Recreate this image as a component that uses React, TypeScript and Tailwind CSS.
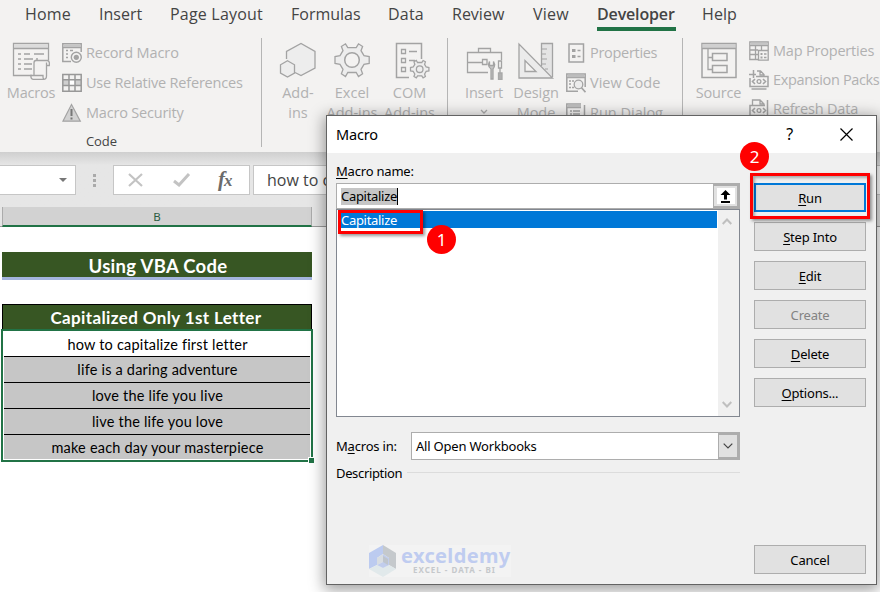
import type { ReactNode } from 'react';

const tabs = [
  { label: 'Home', cls: 'w-[74px] tracking-[0.2px]' },
  { label: 'Insert', cls: 'w-[71px] tracking-[0px]' },
  { label: 'Page Layout', cls: 'w-[121px] tracking-[0.2px]' },
  { label: 'Formulas', cls: 'w-[97px] tracking-[0px]' },
  { label: 'Data', cls: 'w-[64px] tracking-[0.2px]' },
  { label: 'Review', cls: 'w-[81px] tracking-[0px]' },
  { label: 'View', cls: 'w-[64px] tracking-[0.2px]' },
  { label: 'Developer', cls: 'w-[105px] tracking-[0px]', active: true },
  { label: 'Help', cls: 'w-[60px] tracking-[0.1px]' },
];

const rows = [
  'how to capitalize first letter',
  'life is a daring adventure',
  'love the life you live',
  'live the life you love',
  'make each day your masterpiece',
];

function Icon({ w, h, children }: { w: number; h: number; children: ReactNode }) {
  return (
    <svg width={w} height={h} viewBox={`0 0 ${w} ${h}`} fill="none" stroke="#a3a3a3" strokeWidth="1.3" className="shrink-0">
      {children}
    </svg>
  );
}

function MacrosIcon() {
  return (
    <Icon w={38} h={38}>
      <path d="M20 33.5H1.5V1.5H36.500V18" />
      <path d="M2 2.500H36V6H2z" fill="#dcdcdc" stroke="none" />
      <path d="M1.500 6.500H36.500" />
      <path d="M6 12h3M12 12h6M22 12h10M6 17h3M12 17h9M24 17h2M6 22h3M12 22h8M6 27h3M12 27h8" strokeWidth="1.500" />
      <path d="M23 18.500H35.500Q38 19 37.300 23.500H34.500V34Q34.500 37.300 31.500 37.300H21Q18.800 37 18.800 33.500H22V21Q22 18.500 24 18.500M34.500 23.500V20.500M22 33.500H31V35Q31 37 32 37" fill="#f3f2f1" />
    </Icon>
  );
}

function AddinsIcon() {
  return (
    <Icon w={38} h={38}>
      <path d="M7.500 17V9.500L22 1.500 36 9.500V26L22 33.500 16 30.500V22.500L8.500 18.500z" fill="#ededed" stroke="none" />
      <path d="M7.500 17V9.500L22 1.500 36 9.500V26L22 33.500 16 30.500" />
      <path d="M8.500 18.800 15.500 22.800V31L8.500 35 1.500 31V22.800z" fill="#ededed" />
    </Icon>
  );
}

function GearIcon() {
  return (
    <Icon w={38} h={38}>
      <path d="M14.800 5.600 12.500 1.800 8.400 4.500 10 8.700 7 13.700 2 14.500V21.500L7 22.300 10 27.400 8.400 31.700 12.500 34.500 14.800 30.500H23.200L25.500 34.500 29.600 31.700 28 27.400 31 22.300 36.200 21.500V14.500L31 13.700 28 8.700 29.600 4.500 25.500 1.800 23.200 5.600z" fill="#ededed" />
      <circle cx="19" cy="18" r="7.300" fill="#f3f2f1" strokeWidth="1.500" />
    </Icon>
  );
}

function ComIcon() {
  return (
    <Icon w={38} h={38}>
      <path d="M17 35.500H4.500V1.500H29.500V17" strokeWidth="1.500" />
      <path d="M9.500 7.500h4v4h-4zM9.500 16.500h4v4h-4zM9.500 25.500h4v4h-4zM17 9.500h8M17 18.500h6" />
      <path d="m25.500 20.500-1.200-2-2.300 1.300.8 2.500-1.600 2.700-2.700.5v3.400l2.700.5 1.600 2.600-.8 2.500 2.300 1.300 1.300-2h4.200l1.300 2 2.300-1.300-.8-2.500 1.600-2.600 2.700-.5v-3.400l-2.700-.5-1.600-2.700.8-2.500-2.300-1.300-1.300 2z" fill="#eee" />
      <circle cx="27.700" cy="27.200" r="3.300" />
    </Icon>
  );
}

function ToolboxIcon() {
  return (
    <Icon w={38} h={38}>
      <path d="M22 30.500H1.500V10.500H35.500V18M1.500 20.500H16M12.500 10V6.500H24.500V10" />
      <path d="M16.500 17.500h4.500v5h-4.500z" />
      <path d="M25 37V27Q22.500 25.500 22.500 22.500L23.500 19.500V23.500H27.500V19.500L28.700 22.500Q28.500 25.500 27 27V37z" fill="#c4c4c4" />
      <path d="M32.500 19h3v7h-3zM34 26v5" />
      <path d="M32.500 31h3.500v6.500h-3.500z" fill="#b0b0b0" stroke="#a8a8a8" />
    </Icon>
  );
}

function DesignIcon() {
  return (
    <Icon w={38} h={38}>
      <path d="M24.500 24V1.500H35.500V35" fill="#e4e4e4" />
      <path d="M2 2V36H35.500z" fill="#ebebeb" />
      <path d="M8 18.500V29.500H19z" fill="#f3f2f1" />
      <path d="M25 7h5M25 12h4M25 17h5M25 22h4M28 27h3" strokeWidth="1.200" />
    </Icon>
  );
}

function SourceIcon() {
  return (
    <Icon w={38} h={38}>
      <rect x="2" y="1.500" width="34" height="34" strokeWidth="1.500" />
      <path d="M2.500 2H35.500V6H2.500z" fill="#d0d0d0" stroke="none" />
      <path d="M2 6.500H36M8 7V27.500H12M8 15.500H12" />
      <path d="M12.500 11.500h14.500v7H12.500zM12.500 23.500h14.500v7H12.500z" strokeWidth="1.500" />
    </Icon>
  );
}

function RecordIcon() {
  return (
    <Icon w={20} h={20}>
      <path d="M9 18.500H.8V.8H19.200V9M1 4.500H19" strokeWidth="1.500" />
      <path d="M1.500 1.500h17V4h-17z" fill="#c5c5c5" stroke="none" />
      <path d="M4 7.500h2M8 7.500h3M4 11h2M4 14.500h2" />
      <circle cx="14.300" cy="14.300" r="5" fill="#f3f2f1" strokeWidth="1.400" />
      <circle cx="14.300" cy="14.300" r="2.600" fill="#a3a3a3" stroke="none" />
    </Icon>
  );
}

function RelativeIcon() {
  return (
    <Icon w={20} h={20}>
      <path d="M1 7h18v5.500H1z" fill="#cfcfcf" stroke="none" />
      <path d="M7 7h6v5.500H7z" fill="#fff" stroke="none" />
      <path d="M.8 1.500H19.200V18.200H.8zM1 6.800H19M1 12.500H19M7 1.500V18M13 1.500V18" strokeWidth="1.500" stroke="#989898" />
    </Icon>
  );
}

function SecurityIcon() {
  return (
    <Icon w={20} h={20}>
      <path d="M9.500 1.500 18.300 18.200H.9z" fill="#d2d2d2" strokeWidth="1.200" />
      <path d="M9.500 6v7M9.500 14.500v2" stroke="#777" strokeWidth="2" />
    </Icon>
  );
}

function PropertiesIcon() {
  return (
    <Icon w={20} h={20}>
      <rect x="1" y="1" width="14.500" height="18" strokeWidth="1.500" />
      <path d="M4 6h3.500v3H4zM4 12h3.500v3H4z" fill="#a3a3a3" stroke="none" />
      <path d="M9.500 7.500h3M9.500 13.500h3" />
    </Icon>
  );
}

function ViewCodeIcon() {
  return (
    <Icon w={20} h={20}>
      <path d="M12 18.300H.8V1H19.200V9M1 4.500H19M19.200 9V14" strokeWidth="1.500" />
      <path d="M1.500 1.500h17v2.700h-17z" fill="#bdbdbd" stroke="none" />
      <path d="M3 8h2M6 8h2M3 11h2M3 14.500h2M6 14.500h2" />
      <circle cx="12.500" cy="11.500" r="4.300" fill="#ececec" />
      <path d="m15.500 14.800 4 4.500" strokeWidth="1.700" />
    </Icon>
  );
}

function DialogIcon() {
  return (
    <Icon w={20} h={20}>
      <path d="M12 18.300H.8V1H15M1 4.500H15M18.500 2V18" strokeWidth="1.500" />
      <path d="M1.500 1.500h13.500v2.700h-13.500z" fill="#bdbdbd" stroke="none" />
      <path d="M4 8h2M7 8h7M4 11h2M7 11h7M4 14.500h2M7 14.500h7" />
    </Icon>
  );
}

function MapIcon() {
  return (
    <Icon w={20} h={20}>
      <path d="M9 18.500H.8V1H19.200V9M1 4.500H19M1 9H9M1 13.500H9M6.500 4.500V18M12.500 4.500V9" strokeWidth="1.300" />
      <path d="M1.500 1.500h17V4h-17z" fill="#c5c5c5" stroke="none" />
      <path d="M9.500 9.500h9.700v9.700H9.500z" fill="#f3f2f1" />
      <path d="M11.500 12h2v2h-2zM11.500 15.500h2v2h-2z" fill="#a3a3a3" stroke="none" />
      <path d="M15 13h2.500M15 16.500h2.500" />
    </Icon>
  );
}

function PackIcon({ refresh = false }: { refresh?: boolean }) {
  return (
    <Icon w={20} h={20}>
      <path d={refresh ? 'M3.500 6V1H11L15 5V6M11 1V5H15' : 'M8 1H11.500L15 4.500V6M11 1V5H15'} />
      {!refresh && <path d="M0 4.500H7M4.500 0V8" strokeWidth="1.500" />}
      <path d={refresh ? 'M16 6.500H1V16.500H16M18.500 1V17' : 'M7 6.500H19V16.500H1V8'} strokeWidth="1.500" />
      <path d="m6 9-2.500 2.500L6 14M14 9l2.500 2.500L14 14" strokeWidth="1.600" />
      <circle cx="10" cy="11.500" r="1.900" />
      <path d="M2.500 19H17.500" strokeWidth="1.500" />
    </Icon>
  );
}

function BigButton({ icon, lines, cls }: { icon: ReactNode; lines: string[]; cls: string }) {
  return (
    <div className={`flex shrink-0 flex-col items-center text-[14.5px] leading-5 ${cls}`}>
      <div className="mb-[3px] h-[38px]">{icon}</div>
      {lines.map((line) => (
        <span key={line} className="whitespace-nowrap">{line}</span>
      ))}
    </div>
  );
}

function SmallButton({ icon, label, cls }: { icon: ReactNode; label: string; cls: string }) {
  return (
    <div className={`flex shrink-0 items-center gap-1 whitespace-nowrap ${cls}`}>
      {icon}
      <span>{label}</span>
    </div>
  );
}

function Ribbon() {
  return (
    <div className="h-[152px] overflow-hidden bg-[#f3f2f1] font-['Open_Sans',sans-serif]">
      <div className="flex h-[38px] pl-[25px] text-base text-[#444]">
        {tabs.map((t) => (
          <div key={t.label} className={`shrink-0 whitespace-nowrap pt-[2px] leading-6 ${t.cls}`}>
            {t.active ? (
              <span className="inline-block h-[29px] w-[79px] border-b-4 border-[#217346] font-semibold tracking-[-0.15px]">{t.label}</span>
            ) : (
              t.label
            )}
          </div>
        ))}
      </div>
      <div className="flex h-[109px] text-[14.5px] text-[#b1b1b1]">
        <div className="flex w-[262px] shrink-0 flex-col border-r border-[#b5b5b5]">
          <div className="flex h-[94px]">
            <div className="w-[62px] pt-1">
              <BigButton icon={<MacrosIcon />} lines={['Macros']} cls="w-[62px] tracking-[-0.2px]" />
            </div>
            <div className="flex flex-col">
              <SmallButton icon={<RecordIcon />} label="Record Macro" cls="h-[30px] tracking-[-0.1px]" />
              <SmallButton icon={<RelativeIcon />} label="Use Relative References" cls="h-[30px] tracking-[-0.2px]" />
              <SmallButton icon={<SecurityIcon />} label="Macro Security" cls="h-[30px] tracking-[-0.2px]" />
            </div>
          </div>
          <div className="pt-[6px]">
            <div className="pl-[86px] text-[13px] leading-[14px] tracking-[-0.1px] text-[#444]">Code</div>
          </div>
        </div>
        <div className="flex w-[186px] shrink-0 border-r border-[#b5b5b5] pt-1 pl-[9px]">
          <BigButton icon={<AddinsIcon />} lines={['Add-', 'ins']} cls="w-[54px]" />
          <BigButton icon={<GearIcon />} lines={['Excel', 'Add-ins']} cls="w-[54px]" />
          <BigButton icon={<div className="pl-[3px]"><ComIcon /></div>} lines={['COM', 'Add-ins']} cls="w-[61px]" />
        </div>
        <div className="flex w-[235px] shrink-0 border-r border-[#b5b5b5] pl-[9px]">
          <div className="flex pt-1">
            <div>
              <BigButton icon={<div className="pl-[2px]"><ToolboxIcon /></div>} lines={['Insert']} cls="w-[54px] tracking-[-0.2px]" />
              <svg width="8" height="6" className="mx-auto mt-[6px]" fill="none" stroke="#aaa" strokeWidth="1.3">
                <path d="m1 1 3 3 3-3" />
              </svg>
            </div>
            <BigButton icon={<DesignIcon />} lines={['Design', 'Mode']} cls="w-[50px] tracking-[-0.1px]" />
          </div>
          <div className="flex flex-col pl-[5px]">
            <SmallButton icon={<PropertiesIcon />} label="Properties" cls="h-[30px] tracking-[-0.3px] pl-[2px] gap-[2px]" />
            <SmallButton icon={<ViewCodeIcon />} label="View Code" cls="h-[30px] tracking-[0px]" />
            <SmallButton icon={<DialogIcon />} label="Run Dialog" cls="h-[30px] tracking-[0px]" />
          </div>
        </div>
        <div className="flex">
          <div className="pt-1">
            <BigButton icon={<SourceIcon />} lines={['Source']} cls="w-[71px] tracking-[-0.2px]" />
          </div>
          <div className="-mt-[2px] flex flex-col">
            <SmallButton icon={<MapIcon />} label="Map Properties" cls="-ml-[5px] h-[29px] tracking-[-0.2px]" />
            <SmallButton icon={<PackIcon />} label="Expansion Packs" cls="-ml-[5px] h-[29px] tracking-[-0.35px]" />
            <SmallButton icon={<PackIcon refresh />} label="Refresh Data" cls="-ml-[5px] h-[29px] tracking-[-0.2px]" />
          </div>
        </div>
      </div>
    </div>
  );
}

function FormulaBar() {
  return (
    <div className="bg-[#e6e6e6] bg-linear-to-b from-[#cfcfcf] from-0% to-[#e6e6e6] to-[13px] pt-[13px]">
      <div className="flex h-[30px]">
        <div className="flex w-[76px] items-center justify-end border border-l-0 border-[#c6c6c6] bg-white pr-2">
          <svg width="8" height="4" fill="#777">
            <path d="M0 0H8L4 4z" />
          </svg>
        </div>
        <div className="flex w-[37px] flex-col items-center justify-center gap-[2px]">
          <i className="size-[3px] bg-[#aaa]" />
          <i className="size-[3px] bg-[#aaa]" />
          <i className="size-[3px] bg-[#aaa]" />
        </div>
        <div className="flex w-[137px] items-center border border-[#c6c6c6] bg-white">
          <svg width="16" height="14" className="ml-[14px]" fill="none" stroke="#c3c3c3" strokeWidth="2.2">
            <path d="m1 1 13 12M14 1 1 13" />
          </svg>
          <svg width="18" height="14" className="ml-[29px]" fill="none" stroke="#c3c3c3" strokeWidth="3">
            <path d="m1 8 5 4L16 1" />
          </svg>
          <span className="ml-[27px] font-['Liberation_Serif',serif] text-[21px] leading-5 font-bold tracking-[-1px] text-[#6b6b6b] italic">
            f<span className="text-[17px]">x</span>
          </span>
        </div>
        <div className="ml-[3px] flex-1 border border-r-0 border-[#c6c6c6] bg-white pl-[13px] font-['Open_Sans',sans-serif] text-base leading-7 text-[#444]">
          how to capitalize first letter
        </div>
      </div>
      <div className="mt-3 flex h-5 border-b border-[#9b9b9b] pl-[2px]">
        <div className="h-5 w-[310px] border-x border-b-2 border-x-[#ababab] border-b-[#217346] bg-[#d2d2d2] text-center font-['Noto_Sans',sans-serif] text-[11.5px] leading-[19px] text-[#2b5c42]">
          B
        </div>
      </div>
    </div>
  );
}

function Sheet() {
  return (
    <div className="flex-1 bg-white pt-[25px] pl-[1px] font-[Lato,sans-serif] [font-variant-ligatures:none]">
      <div className="ml-[1px] h-[28px] w-[310px] border-b-[3px] border-[#a3b4dd] bg-[#375623] pl-[2px] text-center text-[18.5px] leading-[29px] font-bold tracking-[0.3px] text-white">
        Using VBA Code
      </div>
      <div className="mt-6 ml-[1px] h-[26px] w-[310px] border border-b-0 border-black bg-[#375623] pr-[2px] text-center text-[17px] leading-[26px] font-bold tracking-[0.37px] text-white">
        Capitalized Only 1st Letter
      </div>
      <div className="relative -mt-[1px] w-[312px] border-2 border-[#217346] bg-white p-px">
        {rows.map((row, i) => (
          <div
            key={row}
            className={`pl-px text-center text-[14.5px] tracking-[0.2px] text-black ${i === 0 ? 'h-[25px] border-b border-black bg-white leading-[25px]' : i < 4 ? 'h-[26px] border-b border-black bg-[#c6c6c6] leading-[26px]' : 'h-[24px] bg-[#c6c6c6] leading-[26px]'}`}
          >
            {row}
          </div>
        ))}
        <i className="absolute -right-[3px] -bottom-[3px] size-[6px] border-t border-l border-white bg-[#217346]" />
      </div>
    </div>
  );
}

function DialogButton({ label, plain, disabled, primary }: { label: string; plain?: boolean; disabled?: boolean; primary?: boolean }) {
  return (
    <button
      type="button"
      disabled={disabled}
      className={`h-[29px] w-28 pt-px ${primary ? 'border-2 border-[#0078d7]' : 'border border-[#adadad]'} bg-[#e1e1e1] text-center ${disabled ? 'text-[#838383]' : 'text-black'}`}
    >
      {plain || disabled ? label : (
        <>
          <span className="underline underline-offset-2">{label[0]}</span>
          {label.slice(1)}
        </>
      )}
    </button>
  );
}

function Logo() {
  return (
    <div className="ml-[33px] flex h-8 w-[142px] items-center bg-[#f3f3f3]">
      <svg width="28" height="32" viewBox="0 0 28 32">
        <path d="M0 8 14 0V9L8 13V20L0 24z" fill="#bccbf0" />
        <path d="M14 0 27 8V24L20 20V13L14 9z" fill="#c5c9cc" />
        <path d="M0 24 8 20 14 23 20 20 27 24 14 32z" fill="#e1e9eb" />
        <path d="M14 9V17L8 20V13z" fill="#d8dde2" />
        <path d="M14 9 20 13V20L14 23 8 20 14 17z" fill="#c1cdec" />
        <path d="M14 11 19 14V20L14 17z" fill="#bfc5cc" />
      </svg>
      <div className="ml-1 pb-[3px] font-['Noto_Sans',sans-serif] font-bold">
        <div className="text-[20px] leading-[21px] tracking-[0.35px] text-[#bfccf0]">exceldemy</div>
        <div className="pl-3 text-[8px] leading-[8px] tracking-[1px] whitespace-nowrap text-[#c5c8cb]">EXCEL - DATA - BI</div>
      </div>
    </div>
  );
}

function MacroDialog() {
  return (
    <div className="absolute top-[115px] left-[326px] flex h-[470px] w-[551px] flex-col border border-[#636363] bg-[#f0f0f0] font-['Noto_Sans',sans-serif] text-[13px] leading-5 tracking-[-0.2px] text-black shadow-[0_3px_14px_2px_rgba(0,0,0,0.38)]">
      <div className="flex h-[37px] shrink-0 items-center bg-white pl-[9px] text-[14.5px]">
        <span className="flex-1 pb-[2px]">Macro</span>
        <span className="mr-[48px] pb-[2px] text-base">?</span>
        <svg width="13" height="13" className="mr-[23px] mb-px -ml-px" stroke="#000" strokeWidth="1.2">
          <path d="M.5.5 12.500 12.500M12.500.5.5 12.500" />
        </svg>
      </div>
      <div className="flex flex-1 pl-[9px]">
        <div className="flex w-[404px] flex-col">
          <div className="mt-[8px] h-[22px]">
            <span className="underline underline-offset-2">M</span>acro name:
          </div>
          <div className="flex h-[26px] border border-[#adadad] bg-white">
            <div className="flex flex-1 items-center pl-1">
              <span className="h-[17px] border-r border-black bg-[#c6c6c6] leading-[17px] tracking-[-0.3px]">Capitalize</span>
            </div>
            <div className="flex w-[26px] items-center justify-center border-2 border-l border-[#adadad] bg-[#e1e1e1]">
              <div className="flex h-4 w-[18px] items-center justify-center bg-white">
                <svg width="11" height="13">
                  <path d="M5.500 0 10.500 5H7V9.500H4V5H.5zM1 11H10V13H1z" />
                </svg>
              </div>
            </div>
          </div>
          <div className="flex h-[208px] border border-[#828790] bg-white">
            <div className="flex-1 pt-px pl-px">
              <div className="h-[17px] bg-[#0078d7] pl-[3px] leading-[19px] tracking-[-0.3px] text-white">Capitalize</div>
            </div>
            <div className="ml-px flex w-[21px] flex-col items-center justify-between bg-[#f0f0f0] py-2 pr-[3px]">
              <svg width="10" height="7" fill="none" stroke="#bfbfbf" strokeWidth="2">
                <path d="m.7 6 4.300-4.500L9.300 6" />
              </svg>
              <svg width="10" height="7" fill="none" stroke="#bfbfbf" strokeWidth="2">
                <path d="m.7 1 4.300 4.500L9.300 1" />
              </svg>
            </div>
          </div>
          <div className="mt-[15px] flex h-7 items-center">
            <span className="w-[75px]">
              M<span className="underline underline-offset-2">a</span>cros in:
            </span>
            <div className="flex h-7 flex-1 items-center border border-[#adadad] bg-white pl-1">
              <span className="flex-1">All Open Workbooks</span>
              <div className="flex h-[26px] w-[21px] items-center justify-center border-2 border-l border-[#adadad] bg-[#e1e1e1]">
                <svg width="10" height="6" fill="none" stroke="#444" strokeWidth="1.2">
                  <path d="m.7.7 4.300 4.300L9.300.7" />
                </svg>
              </div>
            </div>
          </div>
          <div className="mt-[3px] flex items-center gap-[5px]">
            <span className="tracking-[-0.35px]">Description</span>
            <div className="mb-[2px] h-px flex-1 bg-[#dcdcdc]" />
          </div>
          <div className="mt-[62px]">
            <Logo />
          </div>
        </div>
        <div className="ml-[14px] flex flex-col gap-[10px] pt-[30px]">
          <DialogButton label="Run" primary />
          <DialogButton label="Step Into" />
          <DialogButton label="Edit" />
          <DialogButton label="Create" disabled />
          <DialogButton label="Delete" />
          <DialogButton label="Options..." />
          <div className="mt-auto mb-[10px]">
            <DialogButton label="Cancel" plain />
          </div>
        </div>
      </div>
    </div>
  );
}

function Badge({ n, cls }: { n: number; cls: string }) {
  return (
    <div className={`absolute flex size-[29px] items-center justify-center rounded-full bg-[#ff0000] pb-px font-['Noto_Sans',sans-serif] text-[17px] leading-none text-white ${cls}`}>
      {n}
    </div>
  );
}

export default function App() {
  return (
    <div className="relative flex h-[592px] w-[880px] flex-col overflow-hidden">
      <Ribbon />
      <FormulaBar />
      <Sheet />
      <MacroDialog />
      <div className="absolute top-[210px] left-[338px] h-6 w-[85px] border-3 border-[#ff0000] shadow-[2px_2px_3px_rgba(0,0,0,0.4)]" />
      <div className="absolute top-[173px] left-[750px] h-[46px] w-[120px] border-3 border-[#ff0000] shadow-[2px_2px_3px_rgba(0,0,0,0.4),inset_2px_2px_3px_rgba(0,0,0,0.3)]" />
      <Badge n={1} cls="top-[225px] left-[427px]" />
      <Badge n={2} cls="top-[142px] left-[740px]" />
    </div>
  );
}
